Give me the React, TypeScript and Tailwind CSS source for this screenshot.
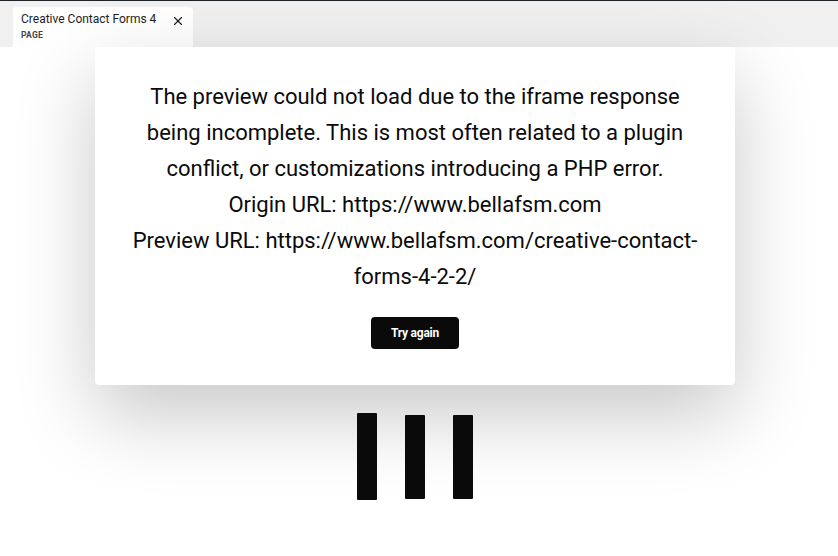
import { X } from "lucide-react";

export default function App() {
  return (
    <div className="h-[556px] w-[838px] overflow-hidden bg-white font-['Roboto',sans-serif] text-[#0a0a0a]">
      <div className="h-px bg-[#1d2327]" />
      <div className="flex h-[46px] items-end bg-[#f0f0f0] pl-[13px]">
        <div className="flex h-[40px] w-[180px] justify-between rounded-t-[4px] bg-white pl-2 pr-2">
          <div className="flex flex-col pt-[5px]">
            <span className="text-[12px] leading-[15px] text-[#1e1e1e]">Creative Contact Forms 4</span>
            <span className="mt-[3px] text-[8.5px] font-bold uppercase leading-[10px] tracking-[0.03em] text-[#444]">Page</span>
          </div>
          <X className="mt-[7px] h-[14px] w-[14px] text-[#1e1e1e]" strokeWidth={2} />
        </div>
      </div>
      <div className="flex flex-col items-center pr-2">
        <div className="w-[640px] rounded-b-[4px] bg-white px-8 pb-[36px] pt-8 text-center shadow-[0_30px_80px_rgba(0,0,0,0.22)]">
          <p className="text-[22px] leading-[36px]">
            The preview could not load due to the iframe response being incomplete. This is most often related to a plugin conflict, or customizations introducing a PHP error.
            <br />
            Origin URL: https://www.bellafsm.com
            <br />
            Preview URL: https://www.bellafsm.com/creative-contact-forms-4-2-2/
          </p>
          <button className="mt-[22px] h-8 w-[88px] rounded-[4px] bg-[#0a0a0a] text-[12px] font-bold tracking-[-0.02em] text-white">
            Try again
          </button>
        </div>
        <div className="mt-[28px] flex items-start gap-[28px]">
          <div className="h-[87px] w-5 rounded-[1px] bg-[#0a0a0a]" />
          <div className="mt-[2px] h-[84px] w-5 rounded-[1px] bg-[#0a0a0a]" />
          <div className="mt-[2px] h-[84px] w-5 rounded-[1px] bg-[#0a0a0a]" />
        </div>
      </div>
    </div>
  );
}
